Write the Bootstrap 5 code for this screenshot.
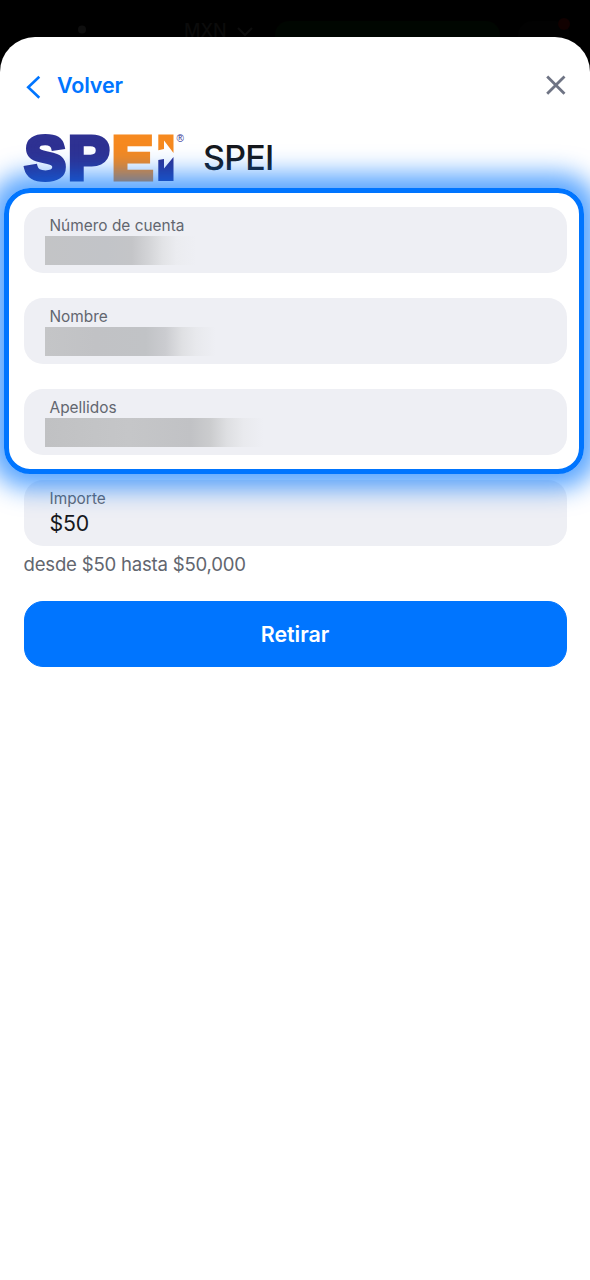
<!DOCTYPE html>
<html lang="es">
<head>
<meta charset="utf-8">
<meta name="viewport" content="width=device-width, initial-scale=1">
<title>SPEI</title>
<link href="https://cdn.jsdelivr.net/npm/bootstrap@5.3.0/dist/css/bootstrap.min.css" rel="stylesheet">
<style>
  body { background: #000; font-family: Inter, "Liberation Sans", sans-serif; width: 590px; height: 1280px; overflow: hidden; color: #16181c; }
  .backdrop-bar { height: 36.5px; }
  .backdrop-bar svg { display: block; }
  .sheet { background: #fff; border-radius: 35px 35px 0 0; height: 1243.5px; }
  .sheet-head { padding: 32px 24px 0 26px; height: 93.5px; }
  .back { color: #0075ff; font-size: 21.5px; font-weight: 600; line-height: 32px; gap: 16px; letter-spacing: -.15px; }
  .brand-row { height: 58px; padding-left: 23px; }
  .brand-name { font-size: 34px; font-weight: 500; line-height: 55px; margin-left: 17px; letter-spacing: -.8px; }
  .highlight { z-index: 2; border: 5px solid #0075ff; border-radius: 26px; margin: 0 6px 5.5px 4px; padding: 13.5px 12.5px 14px 14.5px; box-shadow: 0 0 24px 15px rgba(0,117,255,.64); gap: 24.5px; }
  .field { background: #eeeff4; border-radius: 19px; height: 66.5px; padding: 8px 21.5px 0 26px; }
  .field-label { font-size: 15.4px; line-height: 21px; color: #62666f; letter-spacing: .02px; }
  .masked { width: 280px; height: 29px; margin: .5px 0 0 -4.5px; }
  .mask-a { background: linear-gradient(90deg, #c3c4c6 0, #c2c4c8 22%, #c4c5c8 31%, #d3d4d7 37%, #e2e3e6 42%, #ebecf0 47%, #eeeff4 54%); }
  .mask-b { background: linear-gradient(90deg, #c4c5c7 0, #c1c2c5 18%, #c1c3c6 36%, #cbccd0 43%, #dfe0e3 49%, #e8e9ed 54%, #eeeff4 61%); }
  .mask-c { background: linear-gradient(90deg, #c0c1c3 0, #c5c6c8 30%, #c1c2c5 52%, #cbccce 59%, #dedfe2 65%, #e9eaee 71%, #eeeff4 78%); }
  .amount { font-size: 21.3px; line-height: 29px; letter-spacing: -.2px; }
  .form-tail { padding: 0 23.5px; }
  .limits { font-size: 18.6px; line-height: 28px; color: #62666f; margin-top: 4px; letter-spacing: -.22px; }
  .btn-withdraw { --bs-btn-bg: #0075ff; --bs-btn-color: #fff; --bs-btn-border-color: #0075ff; --bs-btn-font-weight: 600; --bs-btn-font-size: 21.4px; height: 66.5px; border-radius: 19px; margin-top: 22.5px; }
</style>
</head>
<body>
<div class="backdrop-bar" aria-hidden="true">
  <svg width="590" height="37">
    <circle cx="82" cy="29.5" r="4" fill="#0e0e0e"/>
    <text x="184" y="36.500" font-size="18" font-weight="500" fill="#0b0b0b">MXN</text>
    <path d="M238 28l7 7 7-7" fill="none" stroke="#0d0d0d" stroke-width="2"/>
    <rect x="275" y="21" width="225" height="40" rx="14" fill="#000601"/>
    <rect x="518" y="21" width="52" height="40" rx="14" fill="#020202"/>
    <circle cx="564" cy="24" r="6" fill="#110100"/>
  </svg>
</div>
<main class="sheet">
  <header class="sheet-head d-flex justify-content-between align-items-start">
    <a class="back d-flex text-decoration-none" href="#">
      <svg width="15" height="32" viewBox="0 0 15 32" fill="none" stroke="#0075ff" stroke-width="2.6"><path d="M13.3 7.7L2.2 18.2l11.100 10.5"/></svg>
      <span>Volver</span>
    </a>
    <svg width="20" height="32" viewBox="0 0 20 32" stroke="#6f7484" stroke-width="2.8"><path d="M1.2 7.500l17.300 17.300M18.500 7.500L1.200 24.800"/></svg>
  </header>
  <div class="brand-row d-flex">
    <svg width="163" height="58" role="img" aria-label="SPEI">
      <g font-family="Liberation Sans" font-weight="700" font-size="61.5" stroke-width="5">
        <text x="1.7" y="49" fill="#2e3192" stroke="#2e3192">S</text>
        <text x="45.3" y="49" fill="#2e3192" stroke="#2e3192">P</text>
        <text x="89" y="49" fill="#f6891f" stroke="#f6891f">E</text>
      </g>
      <path d="M135.300 4.500h15.200v18.500l-9.500-12.500v8.500l-5.700 1.200z" fill="#f6891f"/>
      <path d="M135.300 30l5.700-1v9.500l9.500-11.500v24h-15.200z" fill="#2e3192"/>
      <text x="153.500" y="11.500" font-family="Liberation Sans" font-size="10" fill="#2e3192">®</text>
    </svg>
    <span class="brand-name">SPEI</span>
  </div>
  <section class="highlight position-relative d-flex flex-column">
    <div class="field"><div class="field-label">Número de cuenta</div><div class="masked mask-a"></div></div>
    <div class="field"><div class="field-label">Nombre</div><div class="masked mask-b"></div></div>
    <div class="field"><div class="field-label">Apellidos</div><div class="masked mask-c"></div></div>
  </section>
  <div class="form-tail">
    <div class="field"><div class="field-label">Importe</div><div class="amount">$50</div></div>
    <div class="limits">desde $50 hasta $50,000</div>
    <button type="button" class="btn btn-withdraw w-100">Retirar</button>
  </div>
</main>
<script src="https://cdn.jsdelivr.net/npm/bootstrap@5.3.0/dist/js/bootstrap.bundle.min.js"></script>
</body>
</html>
